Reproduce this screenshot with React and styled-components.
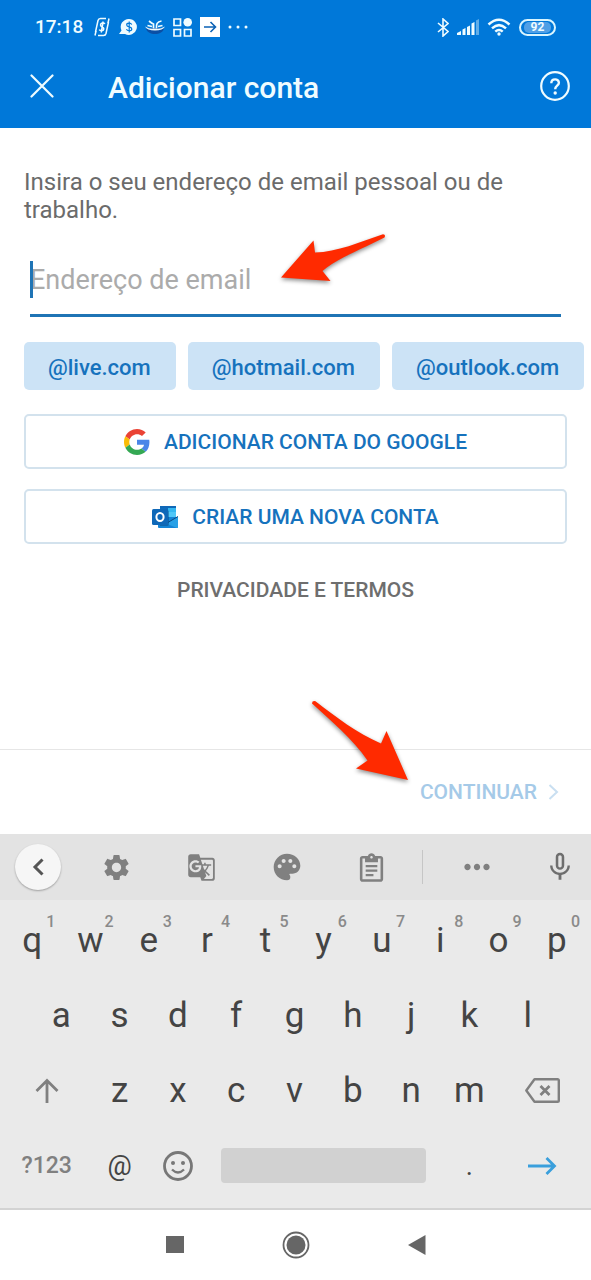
import React from "react";
import styled, { createGlobalStyle } from "styled-components";
import { MdGTranslate, MdMicNone, MdMoreHoriz, MdPalette, MdSettings } from "react-icons/md";

const Global = createGlobalStyle`
  *, *::before, *::after { box-sizing: border-box; }
  body {
    margin: 0;
    background: #fff;
    font-family: Roboto, "Liberation Sans", sans-serif;
  }
  button, input { font-family: inherit; }
  svg { display: block; flex: none; }
`;

const Page = styled.div`
  min-height: 100vh;
  display: flex;
  flex-direction: column;
  overflow-x: hidden;
`;

const Header = styled.header`
  background: #0078d9;
  color: #effcff;
`;

const StatusBar = styled.div`
  display: flex;
  justify-content: space-between;
  align-items: center;
  height: 54px;
  padding: 0 35px;
`;

const StatusGroup = styled.div`
  display: flex;
  align-items: center;
  gap: 8px;
`;

const Clock = styled.time`
  font-size: 19px;
  font-weight: 500;
  line-height: 24px;
  margin-right: 2px;
`;

const Battery = styled.span`
  display: flex;
  width: 37px;
  height: 17px;
  padding: 1px 3px;
  border: 2px solid #d9f5ff;
  border-radius: 9px;
`;

const BatteryLevel = styled.span`
  flex: 1;
  border-radius: 5px;
  background: #4f9fe6;
  font-size: 12px;
  font-weight: 700;
  line-height: 11px;
  text-align: center;
`;

const AppBar = styled.div`
  display: flex;
  align-items: center;
  height: 74px;
  padding: 0 18px 10px 24px;
`;

const IconButton = styled.button`
  display: flex;
  align-items: center;
  justify-content: center;
  width: 36px;
  height: 36px;
  padding: 0;
  border: 0;
  background: none;
  color: inherit;
`;

const Title = styled.h1`
  flex: 1;
  margin: 4px 0 0 48px;
  font-size: 30px;
  font-weight: 500;
  line-height: 36px;
`;

const Main = styled.main`
  flex: 1;
  display: flex;
  flex-direction: column;
  padding: 40px 0 24px 24px;
`;

const Prompt = styled.label`
  display: block;
  padding-right: 24px;
  color: #6b6b6b;
  font-size: 24px;
  line-height: 28px;
`;

const EmailField = styled.div`
  position: relative;
  margin: 24px 30px 0 6px;
`;

const EmailInput = styled.input`
  display: block;
  width: 100%;
  height: 69px;
  padding: 0 0 2px;
  border: 0;
  border-bottom: 3px solid #1f74b5;
  border-radius: 0;
  background: none;
  outline: 0;
  color: #444;
  font-size: 27px;
  caret-color: #1f74b5;
  &::placeholder { color: #ababab; opacity: 1; }
`;

const Caret = styled.span`
  position: absolute;
  left: 0;
  top: 13px;
  width: 3px;
  height: 37px;
  background: #1f74b5;
`;

const FieldPointer = styled.svg`
  position: absolute;
  left: 246px;
  top: -18px;
  overflow: visible;
  pointer-events: none;
  filter: drop-shadow(0 2px 2px rgba(0, 0, 0, 0.45));
`;

const Chips = styled.div`
  display: flex;
  gap: 12px;
  margin-top: 25px;
  overflow: hidden;
`;

const Chip = styled.button`
  flex: none;
  height: 48px;
  padding: 2px 25px 0 24px;
  border: 0;
  border-radius: 5px;
  background: #cce3f6;
  color: #1672bd;
  font-size: 22px;
  font-weight: 500;
`;

const Actions = styled.div`
  display: flex;
  flex-direction: column;
  gap: 20px;
  margin: 24px 24px 0 0;
`;

const ActionButton = styled.button`
  display: flex;
  align-items: center;
  justify-content: center;
  gap: 14px;
  height: 55px;
  border: 2px solid #d3e2ed;
  border-radius: 5px;
  background: #fff;
  color: #1672bd;
  font-size: 21px;
  font-weight: 500;
`;

const TermsLink = styled.a`
  align-self: center;
  margin: 32px 24px 0 0;
  color: #6e6e6e;
  font-size: 21px;
  font-weight: 500;
  line-height: 28px;
  text-decoration: none;
`;

const Footer = styled.footer`
  display: flex;
  justify-content: flex-end;
  align-items: center;
  height: 85px;
  padding: 0 32px;
  border-top: 1px solid #e6e6e6;
`;

const ContinueButton = styled.button`
  position: relative;
  display: flex;
  align-items: center;
  gap: 11px;
  padding: 0;
  border: 0;
  background: none;
  color: #a5cae8;
  font-size: 21px;
  font-weight: 500;
  line-height: 28px;
`;

const ContinuePointer = styled.svg`
  position: absolute;
  right: 148px;
  bottom: 24px;
  overflow: visible;
  pointer-events: none;
  filter: drop-shadow(0 2px 2px rgba(0, 0, 0, 0.45));
`;

const Keyboard = styled.section`
  background: #eaeaea;
  border-bottom: 2px solid #d3d3d3;
`;

const Toolbar = styled.div`
  display: flex;
  align-items: center;
  height: 66px;
  background: #e3e3e3;
  color: #808080;
`;

const Tool = styled.button`
  display: flex;
  align-items: center;
  justify-content: center;
  flex: 1;
  height: 66px;
  padding: 0;
  border: 0;
  background: none;
  color: inherit;
`;

const MicTool = styled(Tool)`
  flex: none;
  width: 72px;
  justify-content: flex-end;
  padding-right: 14px;
`;

const BackSlot = styled.div`
  width: 74px;
  padding-left: 15px;
`;

const BackButton = styled(IconButton)`
  width: 46px;
  height: 46px;
  border-radius: 50%;
  background: #f6f6f6;
  box-shadow: 0 1px 2px rgba(0, 0, 0, 0.3);
  color: #555;
`;

const ToolDivider = styled.span`
  width: 1px;
  height: 34px;
  margin: 0 11px 0 8px;
  background: #c6c6c6;
`;

const Keys = styled.div`
  padding: 3px 5px 5px 3px;
`;

const KeyRow = styled.div`
  display: flex;
  justify-content: center;
  height: 75px;
`;

const Key = styled.button`
  display: grid;
  grid-template: 100% / 100%;
  place-items: center;
  width: ${(p) => (p.$span || 1) * 10}%;
  padding: 0;
  border: 0;
  background: none;
  color: ${(p) => p.$color || "#444"};
  font-size: ${(p) => p.$size || 35}px;
  font-weight: ${(p) => p.$weight || 400};
  line-height: 40px;
`;

const Glyph = styled.span`
  grid-area: 1 / 1;
`;

const Hint = styled.sup`
  grid-area: 1 / 1;
  place-self: start end;
  padding: 10px 6px 0 0;
  color: #8a8a8a;
  font-size: 16px;
  font-weight: 500;
  line-height: 18px;
`;

const SpaceBar = styled.span`
  width: 100%;
  padding: 0 14px;
  &::before {
    content: "";
    display: block;
    height: 35px;
    border-radius: 4px;
    background: #d1d1d1;
  }
`;

const NavBar = styled.nav`
  display: flex;
  justify-content: center;
  align-items: center;
  height: 70px;
  color: #666;
`;

const NavButton = styled(IconButton)`
  width: 121px;
  height: 68px;
`;

const NoteIcon = () => (
  <svg width="18" height="20" viewBox="0 0 18 20" fill="none" stroke="currentColor" strokeWidth="1.5">
    <path d="M2.500 15 5 3.500Q5.500 1.500 7.500 1.500H13M15.500 5 13 16.500Q12.500 18.500 10.500 18.500H5" />
    <path d="M2 18.500 3 14M15 6l1-4.500" />
    <path d="M12 6.800C10.500 5.300 7.500 5.800 7.500 8c0 2.300 3.500 1.700 3.300 4-.2 2-3.300 2.300-4.600.6M10.200 4.500 8.200 15.500" strokeWidth="1.500" />
  </svg>
);

const BubbleIcon = () => (
  <svg width="18" height="18" viewBox="0 0 18 18">
    <path d="M10 1a8 8 0 1 1-4 15H0l2.500-3.500A8 8 0 0 1 10 1Z" fill="currentColor" />
    <path d="M12.700 6.600C12 4.700 7.700 4.700 7.700 6.900c0 2.500 5.100 1.400 5.100 4 0 2.300-4.600 2.500-5.300.2M10.200 3.500v11" fill="none" stroke="#0078d9" strokeWidth="1.200" />
  </svg>
);

const BoatIcon = () => (
  <svg width="20" height="18" viewBox="0 0 20 18">
    <path d="M1 10h18c-1 8-17 8-18 0Z" fill="#0b4fa5" />
    <path d="M0 8.500q5 3 10 2 5 1 10-2-2 4-10 4T0 8.500Z" fill="#effcff" />
    <path d="M4 3q3 2.500 4.500 3v4.500M16.500 3C12 3.500 11 6.500 11.500 10.500M2.500 7.500l4.500 1M17.500 7.500l-4.500 1" fill="none" stroke="#effcff" strokeWidth="1.700" />
  </svg>
);

const AppsIcon = () => (
  <svg width="19" height="19" viewBox="0 0 19 19" fill="none" stroke="currentColor" strokeWidth="1.700">
    <path d="M1 1h6.500v6.500H1ZM1 11.500h6.500V18H1ZM11.500 11.500H18V18h-6.500Z" />
    <circle cx="14.700" cy="4.300" r="4.300" fill="currentColor" stroke="none" />
  </svg>
);

const BoxArrowIcon = () => (
  <svg width="20" height="20" viewBox="0 0 20 20">
    <path d="M0 0h20v20H0Z" fill="#fff" />
    <path d="M4 10h11M10.500 5l5 5-5 5" fill="none" stroke="#0b62b5" strokeWidth="1.600" />
  </svg>
);

const DotsIcon = () => (
  <svg width="20" height="4" viewBox="0 0 20 4" fill="currentColor">
    <circle cx="2" cy="2" r="1.500" />
    <circle cx="10" cy="2" r="1.500" />
    <circle cx="18" cy="2" r="1.500" />
  </svg>
);

const BluetoothIcon = () => (
  <svg width="12" height="19" viewBox="0 0 12 19" fill="none" stroke="currentColor" strokeWidth="1.600">
    <path d="M1 5l10 8.500L6 18V1l5 4.500L1 14" />
  </svg>
);

const SignalIcon = () => (
  <svg width="22" height="16" viewBox="0 0 22 16" fill="currentColor">
    <path d="M0 14 4 12v4H0ZM5.500 10.500l3-1.500V16h-3ZM10 8l3-1.500V16h-3ZM14.500 4.500l3-1.500v13h-3Z" />
    <path d="M19 1.500 22 0v16h-3Z" opacity=".4" />
  </svg>
);

const WifiIcon = () => (
  <svg width="24" height="18" viewBox="0 0 24 18" fill="none" stroke="currentColor" strokeWidth="2.500">
    <path d="M1.500 6.500q10.500-9.500 21 0M5 10.300q7-6.400 14 0M8.300 13.700q3.700-3.400 7.400 0" />
    <circle cx="12" cy="16" r="1.700" fill="currentColor" stroke="none" />
  </svg>
);

const CloseIcon = () => (
  <svg width="24" height="24" viewBox="0 0 24 24" fill="none" stroke="currentColor" strokeWidth="2.200" strokeLinecap="round">
    <path d="M1.500 1.500l21 21M22.500 1.500l-21 21" />
  </svg>
);

const HelpIcon = () => (
  <svg width="30" height="30" viewBox="0 0 30 30" fill="none" stroke="currentColor" strokeWidth="2.200">
    <circle cx="15" cy="15" r="13.800" />
    <path d="M11.300 12.300c0-5.200 7.600-5 7.600-.6 0 3-3.700 3-3.700 6.500" strokeWidth="2.400" />
    <circle cx="15.200" cy="22" r="1.700" fill="currentColor" stroke="none" />
  </svg>
);

const GoogleLogo = () => (
  <svg width="26" height="26" viewBox="0 0 48 48">
    <path fill="#ea4335" d="M24 9.500c3.540 0 6.710 1.220 9.210 3.600l6.850-6.850C35.900 2.380 30.470 0 24 0 14.620 0 6.510 5.380 2.560 13.220l7.980 6.190C12.430 13.720 17.740 9.500 24 9.500z" />
    <path fill="#4a86e8" d="M46.980 24.550c0-1.570-.15-3.090-.38-4.550H24v9.020h12.940c-.58 2.960-2.260 5.480-4.780 7.180l7.730 6c4.510-4.180 7.090-10.360 7.090-17.650z" />
    <path fill="#fbbc05" d="M10.530 28.590c-.48-1.450-.76-2.990-.76-4.590s.27-3.140.76-4.590l-7.980-6.190C.92 16.460 0 20.120 0 24c0 3.880.92 7.540 2.560 10.780l7.970-6.190z" />
    <path fill="#34a853" d="M24 48c6.480 0 11.930-2.130 15.890-5.810l-7.730-6c-2.150 1.450-4.920 2.300-8.160 2.300-6.260 0-11.570-4.220-13.470-9.910l-7.980 6.190C6.510 42.620 14.620 48 24 48z" />
  </svg>
);

const OutlookLogo = () => (
  <svg width="26" height="22" viewBox="0 0 26 22">
    <path d="M8 0h16v12H8Z" fill="#28a8ea" />
    <path d="M8 0h8v5H8Z" fill="#0f6cbd" />
    <path d="M8 0h16v2H8Z" fill="#0f68b8" />
    <path d="M16 2h8v4h-8Z" fill="#35b8f1" />
    <path d="M16 6h8v5h-8Z" fill="#50c8f8" />
    <path d="M6 11h20v10q0 1-1 1H7q-1 0-1-1Z" fill="#1484d6" />
    <path d="M26 10.500 14 17.500l11 4.500q1-.2 1-1Z" fill="#28a0e6" />
    <path d="M26 10.500 15 17" stroke="#0a4a83" strokeWidth="1" />
    <path d="M8 4h7q2 0 2 2v12q0 2-2 2H8Z" fill="#0a4a83" opacity=".5" />
    <rect y="3" width="16" height="16" rx="1.500" fill="#0f68b8" />
    <ellipse cx="8" cy="11" rx="3.600" ry="4" fill="none" stroke="#fff" strokeWidth="2" />
  </svg>
);

const Chevron = () => (
  <svg width="11" height="16" viewBox="0 0 11 16" fill="none" stroke="#c9dff1" strokeWidth="2">
    <path d="M1.500 1l7.500 7-7.500 7" />
  </svg>
);

const BackIcon = () => (
  <svg width="12" height="18" viewBox="0 0 12 18" fill="none" stroke="currentColor" strokeWidth="3">
    <path d="M10.500 1.500 3 9l7.500 7.500" />
  </svg>
);

const ClipboardIcon = () => (
  <svg width="31" height="31" viewBox="0 0 24 24" fill="currentColor">
    <path d="M19 3h-4.200C14.400 1.800 13.300 1 12 1s-2.400.8-2.800 2H5c-1.100 0-2 .9-2 2v16c0 1.100.9 2 2 2h14c1.100 0 2-.9 2-2V5c0-1.100-.9-2-2-2zm-7 0c.55 0 1 .45 1 1s-.45 1-1 1-1-.45-1-1 .45-1 1-1zm7 18H5V5h2v3h10V5h2v16z" />
    <path d="M7.500 10h9v1.800h-9ZM7.500 13.500h9v1.800h-9ZM7.500 17h6v1.800h-6Z" />
  </svg>
);

const MicIcon = styled(MdMicNone)`
  color: #6e6e6e;
`;

const ShiftIcon = () => (
  <svg width="24" height="26" viewBox="0 0 24 26" fill="none" stroke="currentColor" strokeWidth="2.800">
    <path d="M12 25V3M1.500 13 12 2.500 22.500 13" />
  </svg>
);

const BackspaceIcon = () => (
  <svg width="35" height="25" viewBox="0 0 35 25" fill="none" stroke="currentColor" strokeWidth="2.400" strokeLinejoin="round">
    <path d="M9.500 1.200H32.500q1.300 0 1.300 1.300v20q0 1.300-1.300 1.300h-23L1.300 12.500Z" />
    <path d="M15.500 8l9 9M24.500 8l-9 9" strokeWidth="2.800" />
  </svg>
);

const SmileIcon = () => (
  <svg width="30" height="30" viewBox="0 0 30 30" fill="none" stroke="currentColor" strokeWidth="2.800">
    <circle cx="15" cy="15" r="13.500" />
    <path d="M9 18.500q6 6 12 0" strokeWidth="2.300" />
    <circle cx="10" cy="12" r="2" fill="currentColor" stroke="none" />
    <circle cx="20" cy="12" r="2" fill="currentColor" stroke="none" />
  </svg>
);

const EnterIcon = () => (
  <svg width="29" height="18" viewBox="0 0 29 18" fill="none" stroke="currentColor" strokeWidth="2.800">
    <path d="M0 9h27M18.500 1l8 8-8 8" />
  </svg>
);

const domains = ["@live.com", "@hotmail.com", "@outlook.com"];
const topRow = [..."qwertyuiop"];

const LetterKeys = ({ letters }) =>
  [...letters].map((c) => (
    <Key key={c} type="button">
      <Glyph>{c}</Glyph>
    </Key>
  ));

export default function App() {
  return (
    <Page>
      <Global />
      <Header>
        <StatusBar>
          <StatusGroup>
            <Clock>17:18</Clock>
            <NoteIcon />
            <BubbleIcon />
            <BoatIcon />
            <AppsIcon />
            <BoxArrowIcon />
            <DotsIcon />
          </StatusGroup>
          <StatusGroup>
            <BluetoothIcon />
            <SignalIcon />
            <WifiIcon />
            <Battery>
              <BatteryLevel>92</BatteryLevel>
            </Battery>
          </StatusGroup>
        </StatusBar>
        <AppBar>
          <IconButton type="button" aria-label="Fechar">
            <CloseIcon />
          </IconButton>
          <Title>Adicionar conta</Title>
          <IconButton type="button" aria-label="Ajuda">
            <HelpIcon />
          </IconButton>
        </AppBar>
      </Header>

      <Main>
        <Prompt htmlFor="email">Insira o seu endereço de email pessoal ou de trabalho.</Prompt>
        <EmailField>
          <EmailInput id="email" type="email" placeholder="Endereço de email" />
          <Caret />
          <FieldPointer width="110" height="54" viewBox="276 230 110 54" aria-hidden="true">
            <path d="M281 277.500 313.500 240.500 315 252.500C337 252 360 242 383 234.200Q386 234.500 384.500 237.500C362 249 338 258 322.500 271L330.500 281Z" fill="#ff2a00" />
          </FieldPointer>
        </EmailField>
        <Chips>
          {domains.map((d) => (
            <Chip key={d} type="button">{d}</Chip>
          ))}
        </Chips>
        <Actions>
          <ActionButton type="button">
            <GoogleLogo />
            ADICIONAR CONTA DO GOOGLE
          </ActionButton>
          <ActionButton type="button">
            <OutlookLogo />
            CRIAR UMA NOVA CONTA
          </ActionButton>
        </Actions>
        <TermsLink href="#termos">PRIVACIDADE E TERMOS</TermsLink>
      </Main>

      <Footer>
        <ContinueButton type="button">
          CONTINUAR
          <Chevron />
          <ContinuePointer width="100" height="84" viewBox="311 698 100 84" aria-hidden="true">
            <path d="M312 703.500Q312 700.500 315.500 701.200C336 717 357 733 381 743.500L386.500 731 408 780 356 768.500 367.500 760.500C352 738 332 722 312 703.500Z" fill="#ff2a00" />
          </ContinuePointer>
        </ContinueButton>
      </Footer>

      <Keyboard aria-label="Teclado">
        <Toolbar>
          <BackSlot>
            <BackButton type="button" aria-label="Voltar">
              <BackIcon />
            </BackButton>
          </BackSlot>
          <Tool type="button" aria-label="Definições"><MdSettings size={31} /></Tool>
          <Tool type="button" aria-label="Traduzir"><MdGTranslate size={29} /></Tool>
          <Tool type="button" aria-label="Temas"><MdPalette size={32} /></Tool>
          <Tool type="button" aria-label="Área de transferência"><ClipboardIcon /></Tool>
          <ToolDivider />
          <Tool type="button" aria-label="Mais"><MdMoreHoriz size={38} /></Tool>
          <MicTool type="button" aria-label="Voz"><MicIcon size={34} /></MicTool>
        </Toolbar>
        <Keys>
          <KeyRow>
            {topRow.map((c, i) => (
              <Key key={c} type="button">
                <Glyph>{c}</Glyph>
                <Hint>{(i + 1) % 10}</Hint>
              </Key>
            ))}
          </KeyRow>
          <KeyRow>
            <LetterKeys letters="asdfghjkl" />
          </KeyRow>
          <KeyRow>
            <Key type="button" $span={1.5} $color="#808080" aria-label="Maiúsculas"><ShiftIcon /></Key>
            <LetterKeys letters="zxcvbnm" />
            <Key type="button" $span={1.5} $color="#808080" aria-label="Apagar"><BackspaceIcon /></Key>
          </KeyRow>
          <KeyRow>
            <Key type="button" $span={1.5} $color="#808080" $size={23} $weight={500}>?123</Key>
            <Key type="button" $size={27}>@</Key>
            <Key type="button" $color="#777" aria-label="Emoji"><SmileIcon /></Key>
            <Key type="button" $span={4} aria-label="Espaço"><SpaceBar /></Key>
            <Key type="button" $size={27}>.</Key>
            <Key type="button" $span={1.5} $color="#3a9fdc" aria-label="Seguinte"><EnterIcon /></Key>
          </KeyRow>
        </Keys>
      </Keyboard>

      <NavBar aria-label="Sistema">
        <NavButton type="button" aria-label="Recentes">
          <svg width="18" height="18" viewBox="0 0 18 18"><path d="M0 0h18v17H0Z" fill="currentColor" /></svg>
        </NavButton>
        <NavButton type="button" aria-label="Início">
          <svg width="28" height="28" viewBox="0 0 28 28">
            <circle cx="14" cy="14" r="12.500" fill="none" stroke="currentColor" strokeWidth="1.800" />
            <circle cx="14" cy="14" r="9.500" fill="currentColor" />
          </svg>
        </NavButton>
        <NavButton type="button" aria-label="Anterior">
          <svg width="18" height="20" viewBox="0 0 18 20"><path d="M0 10 17.500 0v20Z" fill="currentColor" /></svg>
        </NavButton>
      </NavBar>
    </Page>
  );
}
